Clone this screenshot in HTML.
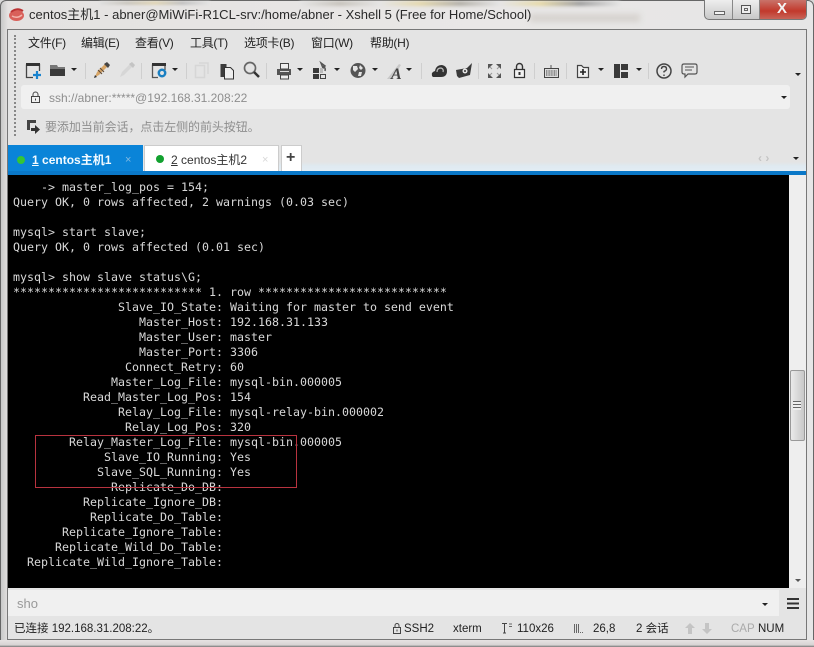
<!DOCTYPE html>
<html><head><meta charset="utf-8"><style>
html,body{margin:0;padding:0;width:814px;height:647px;overflow:hidden;background:#d8d8d8}
div,span,pre,svg{position:absolute;box-sizing:border-box}
.t{font-family:"Liberation Sans","Noto Sans CJK SC",sans-serif;white-space:nowrap;font-size:12px;line-height:16px;color:#222}
.m{letter-spacing:-.3px;top:35px}
pre{margin:0;font-family:"DejaVu Sans Mono","Liberation Mono",monospace;font-size:11.63px;line-height:15px;color:#d8d8d8}
.sep{width:1px;height:16px;top:63px;background:#cfcfcf}
.ar{width:0;height:0;border-left:3px solid transparent;border-right:3px solid transparent;border-top:3px solid #222}
</style></head><body>
<div style="left:0;top:0;width:814px;height:647px;border:1px solid #666;border-radius:6px 6px 0 0;background:linear-gradient(90deg,#c8c8c8 0,#e4e2e1 7px,#e9e7e6 60%,#e6e6e6 100%)"></div>
<div style="left:100px;top:1px;width:110px;height:4px;background:linear-gradient(90deg,#ddd,#c5c1b8,#dfd3ae,#bbb,#e4e4e4);filter:blur(1px);opacity:.8"></div>
<div style="left:300px;top:1px;width:320px;height:5px;background:linear-gradient(90deg,#e4e4e4,#bdb9b0,#e4e4e4,#e3d49e,#a5a198,#e4e4e4,#e6d698,#8c8c8c,#e4e4e4);filter:blur(1.5px);opacity:.8"></div>
<div style="left:530px;top:14px;width:110px;height:8px;background:#d6d2ce;filter:blur(3px)"></div>
<svg style="left:8px;top:7px" width="17" height="15" viewBox="0 0 17 15"><ellipse cx="8.5" cy="8.5" rx="7.5" ry="5.5" fill="#d9605a"/><path d="M3 5Q9 0 15 4" stroke="#b33" stroke-width="2" fill="none"/><path d="M4 9Q9 12 14 8" stroke="#f2b5ad" stroke-width="1.5" fill="none"/></svg>
<div class="t" style="left:29px;top:7px;font-size:13px;color:#2a2a2a">centos主机1 - abner@MiWiFi-R1CL-srv:/home/abner - Xshell 5 (Free for Home/School)</div>
<!-- window buttons -->
<div style="left:704px;top:0;width:103px;height:20px;border:1px solid #777;border-top:0;border-radius:0 0 5px 5px;background:linear-gradient(#eee,#c8c8c8);overflow:hidden">
<div style="left:27px;top:0;width:1px;height:20px;background:#888"></div><div style="left:54px;top:0;width:1px;height:20px;background:#888"></div>
<div style="left:55px;top:0;width:48px;height:20px;background:linear-gradient(#c9736a,#c2392c 55%,#c96a5e)"></div>
<div style="left:9px;top:11px;width:11px;height:4px;background:#f3f3f3;border:1px solid #666"></div>
<div style="left:36px;top:5px;width:10px;height:9px;border:1px solid #555;background:#eee"><div style="left:2px;top:2px;width:4px;height:3px;border:1px solid #666"></div></div>
<div class="t" style="left:72px;top:1px;font-size:15px;font-weight:bold;color:#f4f4f4">X</div>
</div>
<!-- main panel -->
<div style="left:7px;top:29px;width:800px;height:611px;border:1px solid #777;background:#e4e4e4"></div>
<div style="left:14px;top:35px;width:2px;height:101px;border-left:2px dotted #888"></div>
<div class="t m" style="left:28px">文件(F)</div>
<div class="t m" style="left:81px">编辑(E)</div>
<div class="t m" style="left:135px">查看(V)</div>
<div class="t m" style="left:190px">工具(T)</div>
<div class="t m" style="left:244px">选项卡(B)</div>
<div class="t m" style="left:311px">窗口(W)</div>
<div class="t m" style="left:370px">帮助(H)</div>
<!-- toolbar icons -->
<svg style="left:0;top:55px" width="814" height="32" viewBox="0 55 814 32" fill="none">
<path d="M26.5 64.500H39.500V71M26.500 64.500V77.500H33" stroke="#444" stroke-width="1.300"/><path d="M26 63h14v3H26z" fill="#333"/><path d="M37 71v8M33 75h8" stroke="#1a84cf" stroke-width="2.200"/>
<path d="M50 65h7l1 2h7v3h-15z" fill="#777"/><path d="M50 69h15v7H50z" fill="#3a3a3a"/>
<path d="M71 68h6l-3 3z" fill="#222"/>
<path d="M95 77l4-2 9-9-2-3-9 9z" fill="#d7a566"/><path d="M104 64l3-2 3 3-2 3z" fill="#444"/><path d="M94 78l3-1-2-2z" fill="#333"/><path d="M98 70l4 4M100 68l4 4" stroke="#5b4a3a"/>
<path d="M120 77l4-2 9-9-2-3-9 9z" fill="#d6d6d6"/><path d="M129 64l3-2 3 3-2 3z" fill="#c4c4c4"/>
<path d="M152.500 64.500H165V70M152.500 64.500V77.500H158" stroke="#555" stroke-width="1.300"/><path d="M152 63h14v3h-14z" fill="#333"/><circle cx="162" cy="73" r="3.200" stroke="#1a7fc2" stroke-width="2.500"/>
<path d="M172 68h6l-3 3z" fill="#222"/>
<path d="M195.500 65.500h9v12h-9zM199 63h9v11" stroke="#d6d6d6" stroke-width="1.500"/>
<path d="M220.500 64h6v13h-6z" fill="#3c3c3c"/><path d="M224.500 67.500h6l3 3V79h-9z" fill="#eee" stroke="#333"/>
<circle cx="250" cy="68" r="5.500" stroke="#666" stroke-width="1.700"/><path d="M254 72l5 5" stroke="#333" stroke-width="2.500"/>
<path d="M277 69h14v6h-14z" fill="#555"/><path d="M280.500 63.500h8V69h-8zM280.500 75h8v4h-8z" fill="#eee" stroke="#444"/><path d="M280 71.500h9" stroke="#ddd"/>
<path d="M297 68h6l-3 3z" fill="#222"/>
<path d="M313 68h6v5h-6zM313 74h6v5h-6z" fill="#3a3a3a"/><path d="M320.500 74.500h5v4h-5z" stroke="#444"/><path d="M321 63l4 3-2 2zM323 66q3 2 2 5" stroke="#555" stroke-width="1.500"/><path d="M320 68h3v5h-3z" fill="#bbb"/>
<path d="M334 68h6l-3 3z" fill="#222"/>
<circle cx="358" cy="70.500" r="7.500" fill="#555"/><path d="M353 66l4 0 1 3-3 3-2-2zM360 65l3 3-2 2-2-2zM359 72l3 0-1 4-3 0z" fill="#e4e4e4"/>
<path d="M372 68h6l-3 3z" fill="#222"/>
<path d="M387 79l12-15 2 1-9 14z" fill="#c8c8c8"/>
<text x="391" y="79" font-family="Liberation Serif,serif" font-size="16" font-style="italic" font-weight="bold" fill="#444">A</text>
<path d="M406 68h6l-3 3z" fill="#222"/>
<path d="M432 76q-1-4 3-5 1-6 7-6 5 1 5 6 0 6-6 6h-8z" fill="#333"/><path d="M437 72q0-4 4-4 3 1 2 4" stroke="#bbb" stroke-width="1.200"/>
<path d="M456 70l11-2 5-5-2 12-11 3-2-2z" fill="#3a3a3a"/><circle cx="465" cy="71" r="2.500" fill="#e8e8e8"/><circle cx="465" cy="71" r="1" fill="#333"/>
<path d="M488 64h5l-5 5zM501 64h-5l5 5zM488 78h5l-5-5zM501 78h-5l5-5z" fill="#555"/><path d="M490 67l2 2M499 67l-2 2M490 75l2-2M499 75l-2-2" stroke="#999"/>
<path d="M514.500 69.500h10v8h-10z" fill="#f2f2f2" stroke="#333" stroke-width="1.200"/><path d="M516.500 69v-2.500a3 3 0 0 1 6 0V69" stroke="#333" stroke-width="1.400"/><rect x="518.500" y="72" width="2" height="3" fill="#333"/>
<path d="M544.500 68.500h14v9h-14z" fill="#ddd" stroke="#444"/><path d="M546 71h11M546 73h11M546 75h11" stroke="#444" stroke-dasharray="1 .6"/><path d="M551 68v-3" stroke="#555"/>
<path d="M577.500 65.500h4l2 2h5v10h-11z" fill="#f0f0f0" stroke="#444" stroke-width="1.200"/><path d="M583 69v6M580 72h6" stroke="#222" stroke-width="1.600"/>
<path d="M598 68h6l-3 3z" fill="#222"/>
<path d="M614 64h6v14h-6z" fill="#3a3a3a"/><path d="M621 64h7v6h-7zM621 72h7v6h-7z" fill="#3a3a3a"/>
<path d="M636 68h6l-3 3z" fill="#222"/>
<circle cx="664" cy="71" r="7" stroke="#444" stroke-width="1.500"/><path d="M661.500 69q0-2.500 2.500-2.500t2.500 2.500q0 1.500-2.500 2.500v1M664 74.500v1.500" stroke="#444" stroke-width="1.400"/>
<path d="M684 64h11q2 0 2 2v6q0 2-2 2h-7l-3 3v-3h-1q-2 0-2-2v-6q0-2 2-2z" stroke="#555" stroke-width="1.200"/><path d="M685 67h9M685 70h7" stroke="#555"/>
<path d="M795 73h6l-3 3z" fill="#222"/>
</svg>
<div class="sep" style="left:85px"></div><div class="sep" style="left:141px"></div><div class="sep" style="left:186px"></div><div class="sep" style="left:266px"></div><div class="sep" style="left:421px"></div><div class="sep" style="left:478px"></div><div class="sep" style="left:534px"></div><div class="sep" style="left:566px"></div><div class="sep" style="left:648px"></div>
<!-- address bar -->
<div style="left:21px;top:85px;width:769px;height:24px;background:#f0f0f0;border-radius:3px"></div>
<svg style="left:30px;top:91px" width="11" height="13" viewBox="0 0 11 13" fill="none"><path d="M1.500 5.500h8v6h-8z" stroke="#444"/><path d="M3 5V3.500a2.500 2.500 0 0 1 5 0V5" stroke="#444"/><path d="M5.500 7.500v2" stroke="#444"/></svg>
<div class="t" style="left:49px;top:90px;color:#8e8e8e">ssh://abner:*****@192.168.31.208:22</div>
<div class="ar" style="left:781px;top:96px"></div>
<!-- hint bar -->
<svg style="left:26px;top:119px" width="15" height="16" viewBox="0 0 15 16"><path d="M1 1h9v3H4v7H1z" fill="#444"/><path d="M5 9h4V6l5 4.500L9 15v-3H5z" fill="#333"/></svg>
<div class="t" style="left:45px;top:119px;color:#8e8e8e;letter-spacing:-.08px">要添加当前会话，点击左侧的前头按钮。</div>
<!-- tabs -->
<div style="left:8px;top:145px;width:798px;height:26px;background:linear-gradient(#e4e4e4 0,#e4e4e4 65%,#dfe9f0 80%,#e2edf4 100%)"></div>
<div style="left:8px;top:145px;width:135px;height:27px;background:#0a84d8"></div>
<div style="left:17px;top:156px;width:8px;height:8px;border-radius:50%;background:#35c535"></div>
<div class="t" style="left:32px;top:152px;color:#f4fbff;font-weight:bold;"><u>1</u> centos主机1</div>
<div class="t" style="left:125px;top:152px;color:#7fb9e2;font-size:11px">×</div>
<div style="left:144px;top:145px;width:135px;height:27px;background:#fff;border:1px solid #ccc;border-bottom:0"></div>
<div style="left:156px;top:155px;width:8px;height:8px;border-radius:50%;background:#12a12f"></div>
<div class="t" style="left:171px;top:152px;color:#333"><u>2</u> centos主机2</div>
<div class="t" style="left:262px;top:152px;color:#d8d8d8;font-size:11px">×</div>
<div style="left:281px;top:145px;width:21px;height:27px;background:#fff;border:1px solid #ccc;border-bottom:0"></div>
<div class="t" style="left:286px;top:150px;font-size:16px;font-weight:bold;color:#444">+</div>
<div class="t" style="left:758px;top:150px;color:#c4c4c4;font-size:12px;font-weight:bold">‹ ›</div>
<div class="ar" style="left:793px;top:157px"></div>
<div style="left:8px;top:171px;width:798px;height:4px;background:#0a78c8"></div>
<!-- terminal -->
<div style="left:8px;top:175px;width:781px;height:413px;background:#000;overflow:hidden">
<pre style="left:5px;top:5px">    -&gt; master_log_pos = 154;
Query OK, 0 rows affected, 2 warnings (0.03 sec)

mysql&gt; start slave;
Query OK, 0 rows affected (0.01 sec)

mysql&gt; show slave status\G;
*************************** 1. row ***************************
               Slave_IO_State: Waiting for master to send event
                  Master_Host: 192.168.31.133
                  Master_User: master
                  Master_Port: 3306
                Connect_Retry: 60
              Master_Log_File: mysql-bin.000005
          Read_Master_Log_Pos: 154
               Relay_Log_File: mysql-relay-bin.000002
                Relay_Log_Pos: 320
        Relay_Master_Log_File: mysql-bin.000005
             Slave_IO_Running: Yes
            Slave_SQL_Running: Yes
              Replicate_Do_DB:
          Replicate_Ignore_DB:
           Replicate_Do_Table:
       Replicate_Ignore_Table:
      Replicate_Wild_Do_Table:
  Replicate_Wild_Ignore_Table:</pre>
</div>
<div style="left:35px;top:435px;width:262px;height:53px;border:1px solid #b8333f"></div>
<!-- scrollbar -->
<div style="left:789px;top:175px;width:17px;height:413px;background:#eee"></div>
<div style="left:790px;top:370px;width:15px;height:71px;border:1px solid #999;border-radius:2px;background:linear-gradient(90deg,#eaeaea,#c8c8c8)"></div>
<div style="left:793px;top:401px;width:8px;height:9px;background:repeating-linear-gradient(#666 0 1px,#eee 1px 3px)"></div>
<div class="ar" style="left:795px;top:579px;border-top-color:#555"></div>
<!-- input bar -->
<div style="left:8px;top:590px;width:771px;height:26px;background:#f0f0f0"></div>
<div class="t" style="left:17px;top:596px;font-size:13px;color:#999">sho</div>
<div class="ar" style="left:762px;top:603px"></div>
<div style="left:787px;top:598px;width:12px;height:11px;background:repeating-linear-gradient(#333 0 2px,transparent 2px 4.500px)"></div>
<!-- status bar -->
<div class="t" style="left:14px;top:621px;font-size:11.500px">已连接 192.168.31.208:22。</div>
<svg style="left:392px;top:622px" width="10" height="13" viewBox="0 0 10 13" fill="none"><path d="M1.500 5.500h7v6h-7z" stroke="#444"/><path d="M3 5V3.500a2 2 0 0 1 4 0V5" stroke="#444"/><path d="M5 7.500v2" stroke="#444"/></svg>
<div class="t" style="left:404px;top:621px;font-size:11.500px">SSH2</div>
<div class="t" style="left:453px;top:621px;font-size:11.500px">xterm</div>
<svg style="left:500px;top:623px" width="13" height="11" viewBox="0 0 13 11" fill="none"><path d="M2 .5h5M4.500 .5v9.500M3 10h3" stroke="#444"/><path d="M9 1h3M9 3.500h3" stroke="#666"/></svg>
<div class="t" style="left:517px;top:621px;font-size:11.500px">110x26</div>
<div style="left:574px;top:624px;width:5px;height:9px;background:repeating-linear-gradient(90deg,#666 0 1px,transparent 1px 2px)"></div>
<div style="left:580px;top:632px;width:4px;height:1px;background:repeating-linear-gradient(90deg,#666 0 1px,transparent 1px 2px)"></div>
<div class="t" style="left:593px;top:621px;font-size:11.500px">26,8</div>
<div class="t" style="left:636px;top:621px;font-size:11.500px">2 会话</div>
<svg style="left:684px;top:622px" width="30" height="13" viewBox="0 0 30 13" fill="#c4c4c4"><path d="M1 6l5-5 5 5H8v6H4V6zM18 7l5 5 5-5h-3V1h-4v6z"/></svg>
<div class="t" style="left:731px;top:621px;font-size:11.500px;color:#aaa">CAP</div>
<div class="t" style="left:758px;top:621px;font-size:11.500px">NUM</div>
<div style="left:0;top:640px;width:814px;height:7px;background:linear-gradient(#e6e2e2,#d8d4d4 70%,#777)"></div>
</body></html>
